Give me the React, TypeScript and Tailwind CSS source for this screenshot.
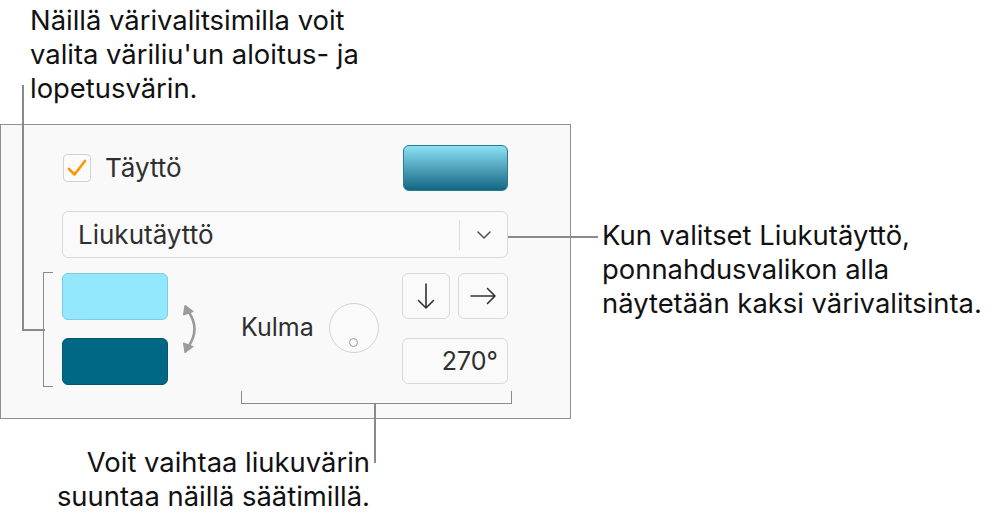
import React from "react";

const callout = "font-['Inter','Liberation_Sans',sans-serif] text-[27.4px] leading-[34px] text-[#111]";
const ui = "font-['Inter','Liberation_Sans',sans-serif] text-[#2f2f2f]";

function Check() {
  return (
    <div className="h-[28px] w-[28px] rounded-[4px] border border-[#d2d2d2] bg-[#fbfbfb] grid place-items-center">
      <svg width="20" height="18" viewBox="0 0 20 18">
        <path d="M2 10 L7.5 15.5 L18 2" fill="none" stroke="#ff9500" strokeWidth="2.6" strokeLinecap="round" strokeLinejoin="round" />
      </svg>
    </div>
  );
}

function SwapIcon() {
  return (
    <svg width="20" height="48" viewBox="0 0 20 48">
      <path d="M6 6 Q19 24 6 42" fill="none" stroke="#9b9b9b" strokeWidth="2.6" />
      <path d="M3 0.5 L1.5 10 L11 6.5 Z" fill="#9b9b9b" stroke="#9b9b9b" strokeWidth="1.2" strokeLinejoin="round" />
      <path d="M3 47.5 L1.5 38 L11 41.5 Z" fill="#9b9b9b" stroke="#9b9b9b" strokeWidth="1.2" strokeLinejoin="round" />
    </svg>
  );
}

export default function App() {
  return (
    <div className="relative w-[992px] h-[524px] bg-white overflow-hidden">
      {/* panel */}
      <div className="pt-[124px]">
        <div className="w-[571px] h-[295px] border-[1.5px] border-[#8f8f8f] bg-[#f9f9f9] pl-[61px] pt-[20px]">
          <div className="w-[446px] flex flex-col">
            <div className="h-[46px] flex items-center justify-between">
              <div className="flex items-center gap-[14px] pl-px">
                <Check />
                <span className={`${ui} text-[26px] leading-none`}>Täyttö</span>
              </div>
              <div className="w-[105px] h-[46px] rounded-[6px] border border-[#2a7a90] bg-gradient-to-b from-[#8be2f6] to-[#0d6884]" />
            </div>

            <div className="mt-[20px] h-[47px] rounded-[6px] border-[1.5px] border-[#d8d8d8] bg-[#fafafa] flex items-center">
              <span className={`${ui} text-[26px] leading-none pl-[15px] flex-1`}>Liukutäyttö</span>
              <div className="w-px h-[30px] bg-[#dcdcdc]" />
              <div className="w-[47px] grid place-items-center">
                <svg width="16" height="10" viewBox="0 0 16 10">
                  <path d="M2 2 L8 8 L14 2" fill="none" stroke="#555" strokeWidth="1.6" strokeLinecap="round" strokeLinejoin="round" />
                </svg>
              </div>
            </div>

            <div className="mt-[15px] flex">
              <div className="flex flex-col gap-[18px] w-[106px]">
                <div className="h-[47px] rounded-[6px] border-[1.5px] border-[#7ccbe0] bg-[#93e8fd]" />
                <div className="h-[47px] rounded-[6px] border border-[#05566e] bg-[#006784]" />
              </div>
              <div className="ml-[14px] flex items-center">
                <SwapIcon />
              </div>
              <div className="ml-[39px] flex items-center">
                <span className={`${ui} text-[25px] leading-none -mt-[4px]`}>Kulma</span>
              </div>
              <div className="ml-[15px] flex items-center">
                <div className="relative h-[50px] w-[50px] rounded-full border-[1.5px] border-[#d2d2d2] bg-[#fafafa] -mt-[3px]">
                  <div className="absolute left-[19px] top-[34px] h-[9px] w-[9px] rounded-full border-[1.5px] border-[#9a9a9a]" />
                </div>
              </div>
              <div className="ml-auto flex flex-col gap-[19px] w-[106px]">
                <div className="flex gap-[8px]">
                  <div className="w-[48px] h-[46px] rounded-[6px] border-[1.5px] border-[#dadada] bg-[#fafafa] grid place-items-center">
                    <svg width="18" height="28" viewBox="0 0 18 28">
                      <path d="M9 2 L9 26 M1.5 18.5 L9 26 L16.5 18.5" fill="none" stroke="#333" strokeWidth="1.6" strokeLinecap="round" strokeLinejoin="round" />
                    </svg>
                  </div>
                  <div className="w-[50px] h-[46px] rounded-[6px] border-[1.5px] border-[#dadada] bg-[#fafafa] grid place-items-center">
                    <svg width="28" height="18" viewBox="0 0 28 18">
                      <path d="M2 9 L26 9 M18.5 1.5 L26 9 L18.5 16.5" fill="none" stroke="#333" strokeWidth="1.6" strokeLinecap="round" strokeLinejoin="round" />
                    </svg>
                  </div>
                </div>
                <div className="h-[46px] rounded-[6px] border-[1.5px] border-[#dadada] bg-[#fafafa] flex items-center justify-end pr-[9px]">
                  <span className={`${ui} text-[25px] leading-none`}>270°</span>
                </div>
              </div>
            </div>
          </div>
        </div>
      </div>

      {/* callout: top-left */}
      <div className={`absolute left-[30px] top-[3px] ${callout}`}>
        <div>Näillä värivalitsimilla voit</div>
        <div>valita väriliu'un aloitus- ja</div>
        <div>lopetusvärin.</div>
      </div>
      <div className="absolute left-[22px] top-[85px] w-[1.5px] h-[246px] bg-[#8a8a8a]" />
      <div className="absolute left-[22px] top-[329px] w-[23px] h-[1.5px] bg-[#8a8a8a]" />
      <div className="absolute left-[43px] top-[272px] w-[10px] h-[115px] border-[1.5px] border-r-0 border-[#8a8a8a]" />

      {/* callout: right */}
      <div className="absolute left-[508px] top-[236px] w-[90px] h-[1.5px] bg-[#8a8a8a]" />
      <div className={`absolute left-[602px] top-[218px] ${callout}`}>
        <div>Kun valitset Liukutäyttö,</div>
        <div>ponnahdusvalikon alla</div>
        <div>näytetään kaksi värivalitsinta.</div>
      </div>

      {/* callout: bottom */}
      <div className="absolute left-[241px] top-[391px] w-[271px] h-[13px] border-[1.5px] border-t-0 border-[#8a8a8a]" />
      <div className="absolute left-[374px] top-[403px] w-[1.5px] h-[60px] bg-[#8a8a8a]" />
      <div className={`absolute right-[622px] top-[445px] text-right ${callout}`}>
        <div>Voit vaihtaa liukuvärin</div>
        <div>suuntaa näillä säätimillä.</div>
      </div>
    </div>
  );
}
